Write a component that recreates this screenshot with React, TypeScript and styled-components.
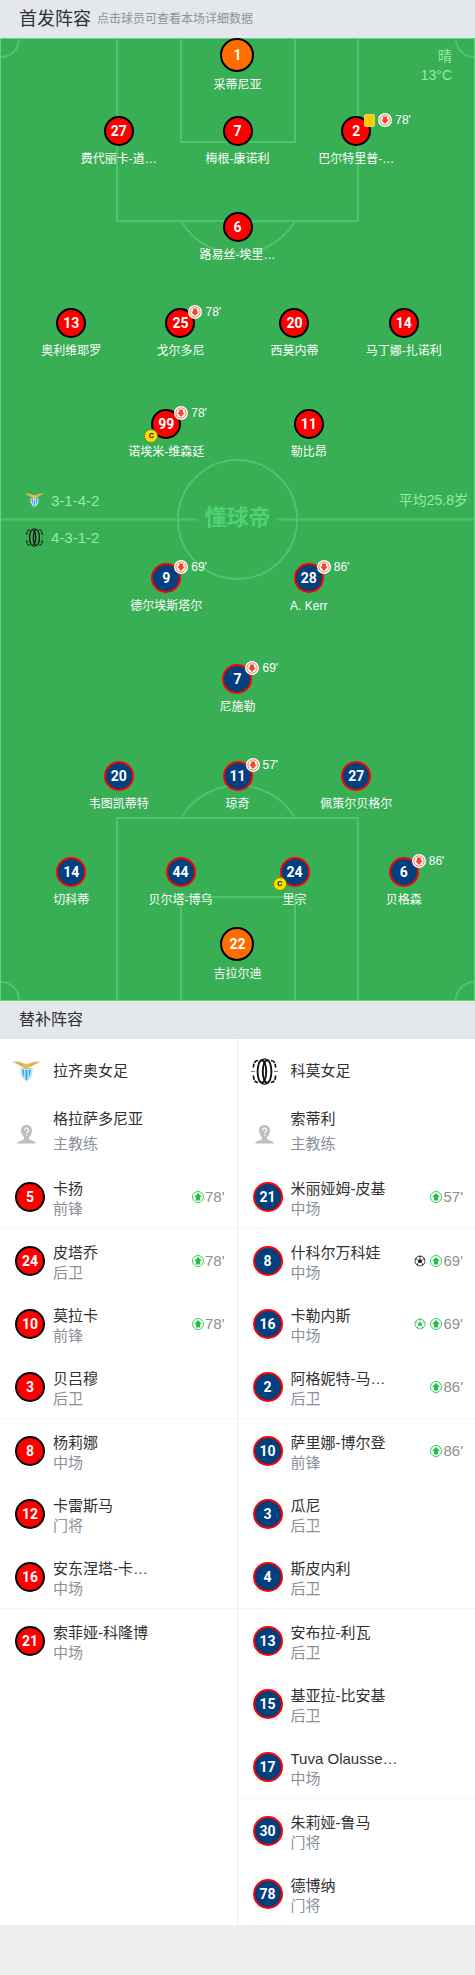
import React from 'react';
import styled, { createGlobalStyle, css } from 'styled-components';

const sans = `'Liberation Sans', 'Noto Sans CJK SC', sans-serif`;

const GlobalStyle = createGlobalStyle`
  * { box-sizing: border-box; }
  body { margin: 0; background: #eeeff1; font-family: ${sans}; color: #303133; }
  button { font: inherit; color: inherit; background: none; border: 0; padding: 0; cursor: pointer; }
  a { color: inherit; text-decoration: none; }
  ul { list-style: none; margin: 0; padding: 0; }
  h2, h3, p { margin: 0; font-weight: 400; }
  svg { display: block; flex: none; }
`;

type Kit = 'home' | 'away' | 'keeper';

interface Starter {
  no: number;
  name: string;
  kit: Kit;
  off?: number;
  card?: boolean;
  captain?: boolean;
}

interface Sub {
  no: number;
  name: string;
  role: string;
  on?: number;
  goal?: 'black' | 'green';
}

const s = (kit: Kit, no: number, name: string, extra: Partial<Starter> = {}): Starter => ({ kit, no, name, ...extra });

const homeLines: { height: number; players: Starter[] }[] = [
  { height: 78, players: [s('keeper', 1, '采蒂尼亚')] },
  {
    height: 96,
    players: [
      s('home', 27, '费代丽卡-道…'),
      s('home', 7, '梅根-康诺利'),
      s('home', 2, '巴尔特里普-…', { card: true, off: 78 }),
    ],
  },
  { height: 96, players: [s('home', 6, '路易丝-埃里…')] },
  {
    height: 101,
    players: [
      s('home', 13, '奥利维耶罗'),
      s('home', 25, '戈尔多尼', { off: 78 }),
      s('home', 20, '西莫内蒂'),
      s('home', 14, '马丁娜-扎诺利'),
    ],
  },
  {
    height: 73,
    players: [s('home', 99, '诺埃米-维森廷', { off: 78, captain: true }), s('home', 11, '勒比昂')],
  },
];

const awayLines: { height: number; players: Starter[] }[] = [
  { height: 101, players: [s('away', 9, '德尔埃斯塔尔', { off: 69 }), s('away', 28, 'A. Kerr', { off: 86 })] },
  { height: 97, players: [s('away', 7, '尼施勒', { off: 69 })] },
  {
    height: 96,
    players: [s('away', 20, '韦图凯蒂特'), s('away', 11, '琼奇', { off: 57 }), s('away', 27, '佩策尔贝格尔')],
  },
  {
    height: 70,
    players: [
      s('away', 14, '切科蒂'),
      s('away', 44, '贝尔塔-博乌'),
      s('away', 24, '里宗', { captain: true }),
      s('away', 6, '贝格森', { off: 86 }),
    ],
  },
  { height: 74, players: [s('keeper', 22, '吉拉尔迪')] },
];

const homeSubs: Sub[] = [
  { no: 5, name: '卡扬', role: '前锋', on: 78 },
  { no: 24, name: '皮塔乔', role: '后卫', on: 78 },
  { no: 10, name: '莫拉卡', role: '前锋', on: 78 },
  { no: 3, name: '贝吕穆', role: '后卫' },
  { no: 8, name: '杨莉娜', role: '中场' },
  { no: 12, name: '卡雷斯马', role: '门将' },
  { no: 16, name: '安东涅塔-卡…', role: '中场' },
  { no: 21, name: '索菲娅-科隆博', role: '中场' },
];

const awaySubs: Sub[] = [
  { no: 21, name: '米丽娅姆-皮基', role: '中场', on: 57 },
  { no: 8, name: '什科尔万科娃', role: '中场', on: 69, goal: 'black' },
  { no: 16, name: '卡勒内斯', role: '中场', on: 69, goal: 'green' },
  { no: 2, name: '阿格妮特-马…', role: '后卫', on: 86 },
  { no: 10, name: '萨里娜-博尔登', role: '前锋', on: 86 },
  { no: 3, name: '瓜尼', role: '后卫' },
  { no: 4, name: '斯皮内利', role: '后卫' },
  { no: 13, name: '安布拉-利瓦', role: '后卫' },
  { no: 15, name: '基亚拉-比安基', role: '后卫' },
  { no: 17, name: 'Tuva Olausse…', role: '中场' },
  { no: 30, name: '朱莉娅-鲁马', role: '门将' },
  { no: 78, name: '德博纳', role: '门将' },
];

/* Section headings */

const SectionBar = styled.header`
  display: flex;
  align-items: center;
  gap: 6px;
  height: 38px;
  padding: 0 19px;
  background: #e4e7ec;
`;

const SectionTitle = styled.h2<{ $size: number }>`
  font-size: ${(p) => p.$size}px;
  line-height: 24px;
`;

const SectionHint = styled.p`
  font-size: 12px;
  line-height: 24px;
  color: #8f9296;
`;

/* Pitch */

const Pitch = styled.section`
  position: relative;
  background: #38ae55;
`;

const Markings = styled.svg`
  position: absolute;
  inset: 0;
  width: 100%;
  height: 100%;
  fill: none;
  stroke: #4cc56c;
  stroke-width: 2;
`;

const Weather = styled.div`
  position: absolute;
  top: 9px;
  right: 23px;
  font-size: 14px;
  line-height: 19px;
  text-align: right;
  color: #94eca9;
`;

const columns: Record<number, string> = {
  1: '30%',
  2: '30% 30%',
  3: '25% 25% 25%',
  4: '22% 24% 24% 22%',
};

const Line = styled.div<{ $count: number; $height: number }>`
  position: relative;
  display: grid;
  grid-template-columns: ${(p) => columns[p.$count]};
  justify-content: center;
  justify-items: center;
  align-items: start;
  height: ${(p) => p.$height}px;
`;

const StarterButton = styled.button`
  display: flex;
  flex-direction: column;
  align-items: center;
  gap: 4px;
`;

const kits = {
  home: css`background: #fe0000; border-color: #000;`,
  away: css`background: #01407f; border-color: #fe0000;`,
  keeper: css`background: #ff6c00; border-color: #000;`,
};

const Shirt = styled.span<{ $kit: Kit }>`
  position: relative;
  display: flex;
  flex: none;
  align-items: center;
  justify-content: center;
  width: ${(p) => (p.$kit === 'keeper' ? 34 : 30)}px;
  height: ${(p) => (p.$kit === 'keeper' ? 34 : 30)}px;
  border: 2px solid;
  border-radius: 50%;
  font-family: Roboto, ${sans};
  font-size: 14px;
  font-weight: 700;
  line-height: 16px;
  color: #fff;
  ${(p) => kits[p.$kit]}
`;

const StarterName = styled.span`
  font-size: 12px;
  line-height: 18px;
  color: #fff;
  white-space: nowrap;
`;

const Events = styled.span`
  position: absolute;
  left: 21px;
  top: -5px;
  display: flex;
  align-items: center;
  gap: 3px;
  height: 14px;
  font-family: ${sans};
  font-size: 12px;
  font-weight: 400;
  line-height: 14px;
`;

const YellowCard = styled.span`
  width: 11px;
  height: 13px;
  border: 1px solid #f0d060;
  border-radius: 2px;
  background: #ffcb00;
`;

const Captain = styled.span`
  position: absolute;
  left: -9px;
  bottom: -6px;
  width: 14px;
  height: 14px;
  border: 1px solid #6b8a1a;
  border-radius: 50%;
  background: #fedf00;
  font-size: 8px;
  line-height: 12px;
  text-align: center;
  color: #222;
`;

const Midfield = styled.div`
  position: relative;
  display: grid;
  grid-template-columns: 1fr auto 1fr;
  align-items: start;
  height: 81px;
  color: #94eca9;
`;

const Formations = styled.div`
  padding-left: 25px;
  font-size: 15px;
`;

const Formation = styled.div`
  display: flex;
  align-items: center;
  gap: 7px;
  height: 37px;
`;

const AverageAge = styled.div`
  padding-right: 7px;
  font-size: 14px;
  line-height: 37px;
  text-align: right;
`;

const Brand = styled.div`
  font-size: 22px;
  font-weight: 700;
  line-height: 72px;
  color: #4fd174;
`;

/* Bench */

const Bench = styled.section`
  display: grid;
  grid-template-columns: 1fr 1fr;
  background: #fff;
`;

const BenchColumn = styled.div`
  &:first-child { border-right: 1px solid #ebedf0; }
`;

const TeamRow = styled.div`
  display: flex;
  align-items: center;
  gap: 13px;
  height: 64px;
  padding-left: 13px;
`;

const TeamName = styled.h3`
  font-size: 15px;
  line-height: 20px;
`;

const CoachRow = styled.div`
  display: flex;
  align-items: center;
  gap: 17px;
  height: 62px;
  padding-left: 17px;
`;

const CoachText = styled.div`
  height: 56px;
  font-size: 15px;
  line-height: 25px;
`;

const Role = styled.div`
  color: #8a9099;
`;

const SubRow = styled.a`
  display: flex;
  align-items: center;
  gap: 8px;
  height: 63px;
  padding: 0 12px 0 15px;
`;

const SubItem = styled.li`
  &:nth-child(3n + 1) { border-bottom: 1px solid #f5f6f7; }
`;

const SubText = styled.div`
  flex: 1;
  padding-top: 5px;
  font-size: 15px;
  line-height: 20px;
  white-space: nowrap;
`;

const SubEvents = styled.div`
  display: flex;
  align-items: center;
  gap: 1px;
  font-size: 15px;
  line-height: 20px;
  color: #8c8f94;
`;

const GoalMark = styled.span`
  padding-right: 3px;
`;

/* Icons */

const OffIcon = () => (
  <svg width="14" height="14" viewBox="0 0 14 14">
    <circle cx="7" cy="7" r="7" fill="#fff" />
    <circle cx="7" cy="7" r="5.2" fill="none" stroke="#f6593c" strokeWidth="0.8" />
    <path d="M5.100 3.400h3.800v3.200h1.900L7 10.900 3.200 6.600h1.900z" fill="#fb4023" />
  </svg>
);

const OnIcon = () => (
  <svg width="12" height="12" viewBox="0 0 12 12">
    <circle cx="6" cy="6" r="5.500" fill="#fff" stroke="#3fcc5c" strokeWidth="1" />
    <path d="M6 1.900l3.900 4.100H8v3.600H4V6H2.100z" fill="#1fc441" />
  </svg>
);

const BallIcon = ({ color }: { color: string }) => (
  <svg width="12" height="12" viewBox="0 0 12 12">
    <circle cx="6" cy="6" r="5" fill="#fff" stroke={color} strokeWidth="0.8" />
    <path
      d="M6 3.800l2.200 1.600-.8 2.500H4.600l-.8-2.500zM4.400 1.100h3.200L6 2.400zM1 5l1.500-.9.300-2L1.300 3.400zM11 5l-1.500-.9-.3-2 1.500 1.300zM2.100 9l1.700-.4.8 2.100zM9.900 9l-1.700-.4-.8 2.100z"
      fill={color}
    />
    <path d="M6 2v2M2.300 4.300l1.700 1M9.700 4.300L8 5.300M3.700 8.700l1-1M8.300 8.700l-1-1" stroke={color} strokeWidth="0.6" />
  </svg>
);

const LazioCrest = ({ size }: { size: number }) => (
  <svg width={size} height={size} viewBox="0 0 27 27">
    <path d="M8 10.500h11c.5 5-.8 9.500-5.500 12.300C8.800 20 7.500 15.500 8 10.500z" fill="#eaf6fd" stroke="#86bfe0" strokeWidth="0.700" />
    <path d="M9.300 11.500h2v8.200c-1.500-2-2.200-5-2-8.200zM12.400 12h2.200v9.300l-1.100.7-1.100-.7zM15.700 11.500h2c.2 3.200-.5 6.200-2 8.200z" fill="#2fa9e6" />
    <path
      d="M0 3.600c3.500-.4 6.500 0 9 1 1.500.6 2.500 1.400 3.500 1.500.4-1 1.600-1 2 0 1.500-.4 2.500-1.300 4-1.800 2.500-.8 5.500-1 8.500-.7-.8 1.100-2 1.500-3 1.900-1.600.8-2.600 1.500-4.100 2-1.400.9-2.600 1.900-3.900 2.100l-1.200 1.900h-2.600l-1.200-1.900C9.600 9.400 8.600 8.500 7.100 7.700 5.600 7.200 4.600 6.400 3 5.600 2 5.100.8 4.700 0 3.600z"
      fill="#e2bd55"
    />
    <path d="M4 5l6 2.200M23 5l-6 2.200" stroke="#c79c37" strokeWidth="0.600" />
  </svg>
);

const ComoCrest = ({ size }: { size: number }) => (
  <svg width={size} height={size} viewBox="0 0 27 27" fill="none" stroke="#151515">
    <ellipse cx="10.900" cy="13.500" rx="4.300" ry="11.300" strokeWidth="1.900" />
    <ellipse cx="16.100" cy="13.500" rx="4.300" ry="11.300" strokeWidth="1.900" />
    <path d="M10 2.200Q13.500-.6 17 2.200M10 24.800q3.500 2.800 7 0" strokeWidth="1.300" />
    <path
      d="M7 2.500C4 2.500 2.600 5 2.400 9.500M2.400 17.500c.2 4.500 1.600 7 4.600 7M20 2.500c3 0 4.400 2.500 4.600 7M24.600 17.500c-.2 4.500-1.600 7-4.600 7"
      strokeWidth="1.700"
      strokeDasharray="4.500 1"
    />
    <path d="M0 13.500h3.800M23.200 13.500H27" strokeWidth="1.200" stroke="#777" />
  </svg>
);

const CoachAvatar = () => (
  <svg width="19" height="19" viewBox="0 0 19 19">
    <path
      d="M9.500 0C6 0 4 2.300 4 5.500c0 2.700 1.300 5.300 3 6.600v1.400c0 1.200-1.500 1.700-3.500 2.300C1.500 16.400.3 17 .2 18.600h18.600c-.1-1.600-1.300-2.200-3.300-2.800-2-.6-3.500-1.100-3.500-2.300v-1.400c1.700-1.300 3-3.900 3-6.600C15 2.300 13 0 9.500 0z"
      fill="#bfbfbf"
    />
    <path d="M7.600 5.200c0-2.700 4-2.600 4 0 0 1.600-2 1.500-2 3.300M9.600 10v1.200" fill="none" stroke="#fff" strokeWidth="1.200" />
  </svg>
);

const StarterView = ({ p }: { p: Starter }) => (
  <StarterButton type="button">
    <Shirt $kit={p.kit}>
      {p.no}
      {p.off && (
        <Events>
          {p.card && <YellowCard />}
          <OffIcon />
          {p.off}'
        </Events>
      )}
      {p.captain && <Captain>C</Captain>}
    </Shirt>
    <StarterName>{p.name}</StarterName>
  </StarterButton>
);

const Lines = ({ lines }: { lines: typeof homeLines }) => (
  <>
    {lines.map((line) => (
      <Line key={line.players[0].no} $count={line.players.length} $height={line.height}>
        {line.players.map((p) => (
          <StarterView key={p.no} p={p} />
        ))}
      </Line>
    ))}
  </>
);

interface TeamProps {
  crest: React.ReactNode;
  name: string;
  coach: string;
  kit: Kit;
  subs: Sub[];
}

const TeamBench = ({ crest, name, coach, kit, subs }: TeamProps) => (
  <BenchColumn>
    <TeamRow>
      {crest}
      <TeamName>{name}</TeamName>
    </TeamRow>
    <CoachRow>
      <CoachAvatar />
      <CoachText>
        <div>{coach}</div>
        <Role>主教练</Role>
      </CoachText>
    </CoachRow>
    <ul>
      {subs.map((p) => (
        <SubItem key={p.no}>
          <SubRow href="#">
            <Shirt $kit={kit}>{p.no}</Shirt>
            <SubText>
              <div>{p.name}</div>
              <Role>{p.role}</Role>
            </SubText>
            {p.on && (
              <SubEvents>
                {p.goal && (
                  <GoalMark>
                    <BallIcon color={p.goal === 'black' ? '#222' : '#2fc650'} />
                  </GoalMark>
                )}
                <OnIcon />
                {p.on}'
              </SubEvents>
            )}
          </SubRow>
        </SubItem>
      ))}
    </ul>
  </BenchColumn>
);

export default function App() {
  return (
    <main>
      <GlobalStyle />
      <SectionBar>
        <SectionTitle $size={18}>首发阵容</SectionTitle>
        <SectionHint>点击球员可查看本场详细数据</SectionHint>
      </SectionBar>
      <Pitch>
        <Markings viewBox="0 0 475 963" preserveAspectRatio="none" aria-hidden="true">
          <path d="M117 1v182h241V1M181 1v103h114V1M181 183a66 66 0 0 0 114 0M1 19a18 18 0 0 0 18-18M474 19a18 18 0 0 1-18-18" />
          <path d="M117 962V780h241v182M181 962V859h114v103M181 780a66 66 0 0 1 114 0M1 944a18 18 0 0 1 18 18M474 944a18 18 0 0 0-18 18" />
          <circle cx="237.500" cy="481.500" r="59.500" />
          <path d="M1 481.500h196M277 481.500h197" />
          <rect x="0.500" y="0.500" width="474" height="962" stroke="#5fd981" strokeWidth="1" />
        </Markings>
        <Weather>
          <div>晴</div>
          <div>13°C</div>
        </Weather>
        <Lines lines={homeLines} />
        <Midfield>
          <Formations>
            <Formation>
              <LazioCrest size={19} />
              3-1-4-2
            </Formation>
            <Formation>
              <ComoCrest size={19} />
              4-3-1-2
            </Formation>
          </Formations>
          <Brand>懂球帝</Brand>
          <AverageAge>平均25.8岁</AverageAge>
        </Midfield>
        <Lines lines={awayLines} />
      </Pitch>
      <SectionBar>
        <SectionTitle $size={16}>替补阵容</SectionTitle>
      </SectionBar>
      <Bench>
        <TeamBench crest={<LazioCrest size={27} />} name="拉齐奥女足" coach="格拉萨多尼亚" kit="home" subs={homeSubs} />
        <TeamBench crest={<ComoCrest size={27} />} name="科莫女足" coach="索蒂利" kit="away" subs={awaySubs} />
      </Bench>
    </main>
  );
}
